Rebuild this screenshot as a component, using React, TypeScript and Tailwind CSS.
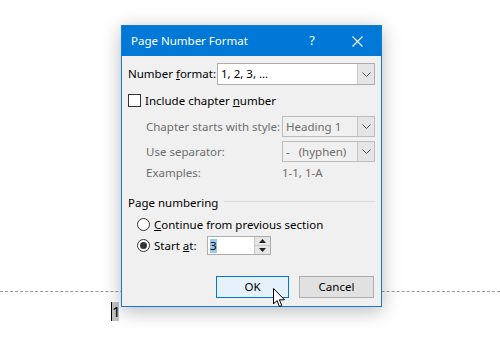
import React from "react";

const font = { fontFamily: '"Noto Sans", "Open Sans", sans-serif' };

function Chevron() {
  return (
    <svg width="9" height="5" viewBox="0 0 9 5" className="block">
      <path d="M0.5 0.5 L4.5 4.5 L8.5 0.5" fill="none" stroke="#505050" strokeWidth="1" />
    </svg>
  );
}

function Combo({ value, disabled, width }: { value: string; disabled?: boolean; width: string }) {
  return (
    <div
      className={`flex shrink-0 items-stretch border ${width} ${
        disabled ? "h-[21px] border-[#bcbcbc] bg-[#f0f0f0] text-[#6d6d6d]" : "h-[22px] border-[#adadad] bg-white text-black"
      }`}
    >
      <span className="flex flex-1 items-center whitespace-pre pl-[3px] leading-none">{value}</span>
      <span className="flex w-[17px] items-center justify-center border-l border-[#c8c8c8] bg-[#e5e5e5]">
        <Chevron />
      </span>
    </div>
  );
}

function Radio({ checked }: { checked?: boolean }) {
  return (
    <span className="flex h-[13px] w-[13px] shrink-0 items-center justify-center rounded-full border border-[#333] bg-white">
      {checked && <span className="h-[7px] w-[7px] rounded-full bg-[#333]" />}
    </span>
  );
}

export default function App() {
  return (
    <div className="relative h-[348px] w-[500px] overflow-hidden bg-white" style={font}>
      {/* document page */}
      <div className="pt-[291px]">
        <div className="border-t border-dashed border-[#9a9a9a]" />
        <div className="ml-[111px] mt-[10px] flex h-[19px] w-[8px] items-center border-l border-black bg-[#c4c4c4] text-[15px] leading-none text-black">
          1
        </div>
      </div>

      {/* dialog window */}
      <div className="absolute left-[121px] top-[25px] flex h-[282px] w-[261px] flex-col whitespace-nowrap border border-[#0f7ad8] bg-[#f0f0f0] text-[11.5px] text-black shadow-[0_4px_18px_rgba(0,0,0,0.28)]">
        <div className="flex h-[30px] shrink-0 items-center bg-[#0078d7] text-[11.5px] text-white">
          <span className="pl-[9px]">Page Number Format</span>
          <span className="ml-auto mr-[37px] text-[13px]">?</span>
          <svg width="11" height="11" viewBox="0 0 11 11" className="mr-[18px]">
            <path d="M0.5 0.5 L10.5 10.5 M10.5 0.5 L0.5 10.5" stroke="#fff" strokeWidth="1.1" />
          </svg>
        </div>

        <div className="flex flex-1 flex-col pl-[6px] pr-[6px]">
          <div className="mt-[7px] flex items-center">
            <span className="w-[90px]">
              Number <u>f</u>ormat:
            </span>
            <Combo value="1, 2, 3, ..." width="w-[158px]" />
          </div>

          <div className="mt-[8px] flex h-[15px] items-center gap-[4px]">
            <span className="h-[13px] w-[13px] border border-[#333] bg-white" />
            <span>
              Include chapter <u>n</u>umber
            </span>
          </div>

          <div className="ml-[18px] mt-[8px] flex flex-col text-[#6d6d6d]">
            <div className="flex items-center">
              <span className="w-[136px]">Chapter starts with style:</span>
              <Combo value="Heading 1" disabled width="w-[93px]" />
            </div>
            <div className="mt-[4px] flex items-center">
              <span className="w-[136px]">Use separator:</span>
              <Combo value="-   (hyphen)" disabled width="w-[93px]" />
            </div>
            <div className="mt-[2px] flex h-[18px] items-center">
              <span className="w-[136px]">Examples:</span>
              <span>1-1, 1-A</span>
            </div>
          </div>

          <div className="mt-[12px] flex items-center gap-[6px]">
            <span>Page numbering</span>
            <span className="mt-[-2px] h-px flex-1 bg-[#dcdcdc]" />
          </div>

          <div className="ml-[9px] mt-[3px] flex h-[21px] items-center gap-[4px]">
            <Radio />
            <span>
              <u>C</u>ontinue from previous section
            </span>
          </div>
          <div className="ml-[9px] flex h-[21px] items-center gap-[4px]">
            <Radio checked />
            <span className="w-[49px]">
              Start <u>a</u>t:
            </span>
            <div className="flex h-[19px] w-[64px] border border-[#adadad] bg-white">
              <span className="flex flex-1 items-center pl-[2px]">
                <span className="bg-[#99c9ef] leading-[14px] text-black">3</span>
              </span>
              <span className="flex w-[16px] flex-col border-l border-[#c8c8c8] bg-[#e5e5e5]">
                <span className="flex flex-1 items-center justify-center border-b border-[#c8c8c8]">
                  <svg width="7" height="4" viewBox="0 0 7 4">
                    <path d="M0 4 L3.5 0 L7 4 Z" fill="#222" />
                  </svg>
                </span>
                <span className="flex flex-1 items-center justify-center">
                  <svg width="7" height="4" viewBox="0 0 7 4">
                    <path d="M0 0 L3.5 4 L7 0 Z" fill="#222" />
                  </svg>
                </span>
              </span>
            </div>
          </div>

          <div className="mb-[8px] mt-auto flex justify-end gap-[10px] pr-[1px]">
            <button className="flex h-[22px] w-[73px] items-center justify-center border border-[#0078d7] bg-[#e5f1fb]">
              OK
            </button>
            <button className="flex h-[22px] w-[75px] items-center justify-center border border-[#adadad] bg-[#e1e1e1]">
              Cancel
            </button>
          </div>
        </div>
      </div>

      {/* mouse pointer */}
      <svg width="13" height="20" viewBox="0 0 13 20" className="absolute left-[273px] top-[288px]">
        <path
          d="M0.5 0.5 L0.5 16 L4 12.5 L6.5 18.5 L8.8 17.6 L6.4 11.8 L11.5 11.8 Z"
          fill="#fff"
          stroke="#000"
          strokeWidth="1"
          strokeLinejoin="miter"
        />
      </svg>
    </div>
  );
}
